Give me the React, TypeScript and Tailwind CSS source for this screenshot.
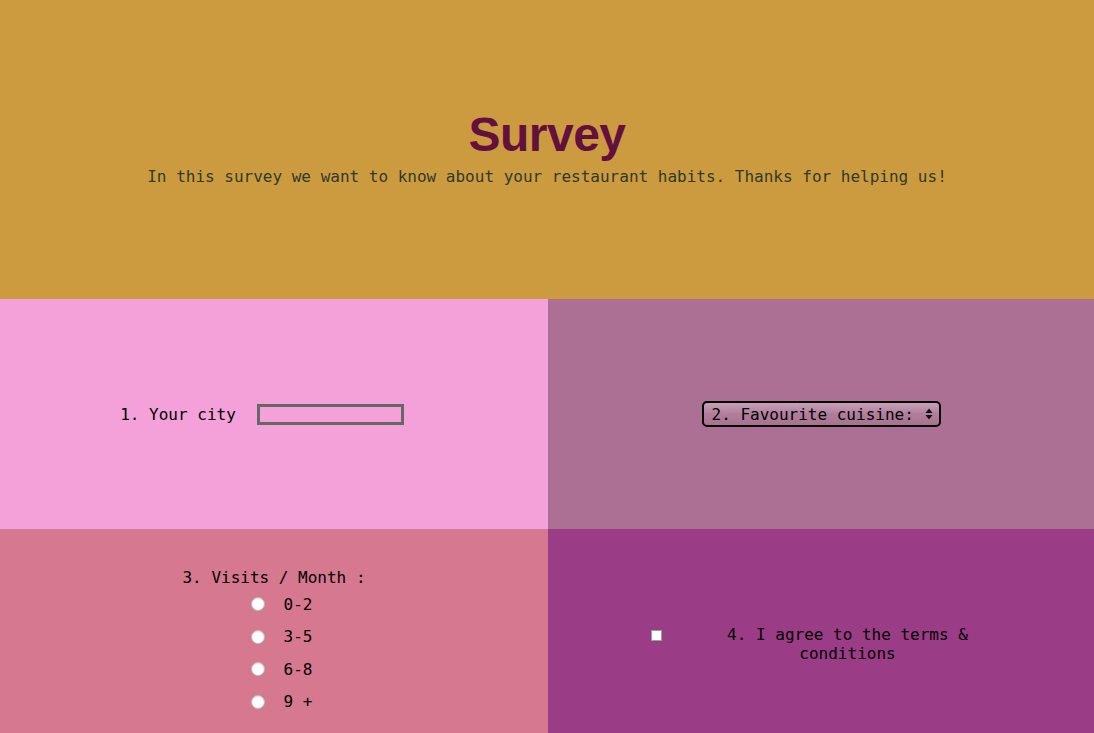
import React from "react";

const mono = "font-['DejaVu_Sans_Mono','Liberation_Mono',monospace]";

const visits = ["0-2", "3-5", "6-8", "9 +"];

export default function App() {
  return (
    <div className={`w-full ${mono} text-[16px] leading-[19px] text-black`}>
      {/* Header */}
      <header className="flex h-[299px] flex-col items-center justify-center bg-[#cd9b3f] pb-[4px]">
        <h1 className="font-['Liberation_Sans',Arial,sans-serif] text-[48px] font-bold leading-[52px] tracking-[-0.5px] text-[#63103f]">
          Survey
        </h1>
        <p className="mt-[6px] text-[#2f3a2a]">
          In this survey we want to know about your restaurant habits. Thanks for helping us!
        </p>
      </header>

      {/* Form grid */}
      <form className="grid grid-cols-[548px_1fr]">
        {/* 1 */}
        <div className="flex h-[230px] items-center justify-center bg-[#f4a0d9] pr-[24px]">
          <label htmlFor="city">1. Your city</label>
          <input
            id="city"
            type="text"
            className="ml-[21px] h-[21px] w-[147px] border-[3px] border-[#676767] bg-transparent outline-none"
          />
        </div>

        {/* 2 */}
        <div className="flex h-[230px] items-center justify-center bg-[#ad7095]">
          <div className="relative flex h-[26px] w-[239px] items-center rounded-[5px] border-2 border-black bg-gradient-to-b from-[#c9a0b8] via-[#b07e9c] to-[#a8728f] pl-[8px]">
            <span>2. Favourite cuisine:</span>
            <svg
              className="absolute right-[6px] top-1/2 -translate-y-1/2"
              width="8"
              height="12"
              viewBox="0 0 8 12"
            >
              <path d="M4 0.5 L7.5 5 H0.5 Z" fill="#111" />
              <path d="M4 11.5 L7.5 7 H0.5 Z" fill="#111" />
            </svg>
          </div>
        </div>

        {/* 3 */}
        <div className="flex h-[230px] flex-col items-center justify-center bg-[#d6788f] pb-[2px]">
          <span>3. Visits / Month :</span>
          <div className="ml-[15px] mt-[1px] flex flex-col">
            {visits.map((v) => (
              <label key={v} className="flex h-[32.5px] items-center">
                <span className="block h-[14px] w-[14px] rounded-full border border-[#b9b9b9] bg-white shadow-[inset_0_1px_1px_rgba(0,0,0,0.1)]" />
                <span className="ml-[19px]">{v}</span>
              </label>
            ))}
          </div>
        </div>

        {/* 4 */}
        <div className="flex h-[230px] items-center justify-center bg-[#9b3c86] pr-[14px]">
          <span className="mb-[17px] block h-[11px] w-[11px] border border-[#9d9d9d] bg-white" />
          <label className="ml-[56px] w-[260px] text-center">
            4. I agree to the terms &amp; conditions
          </label>
        </div>
      </form>
    </div>
  );
}
